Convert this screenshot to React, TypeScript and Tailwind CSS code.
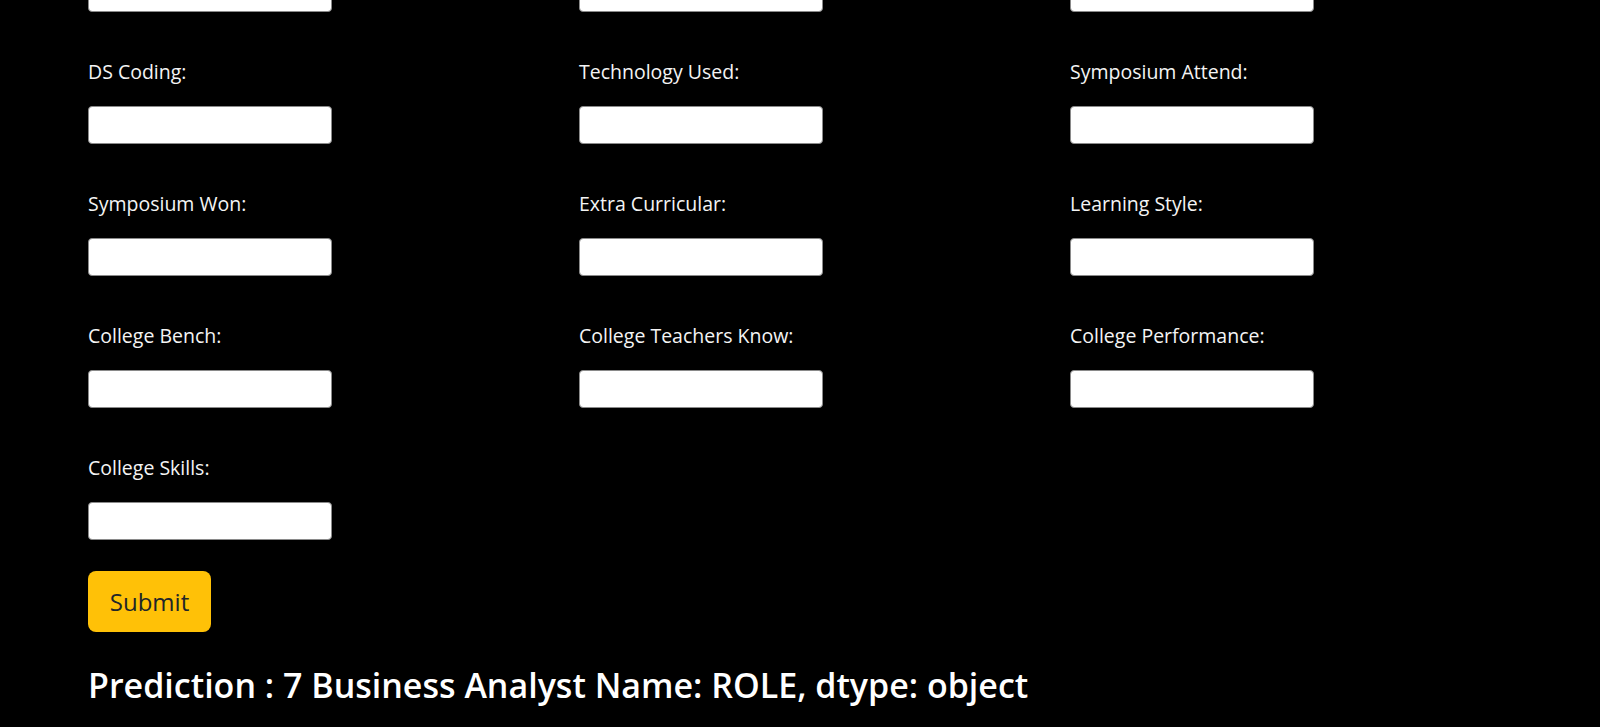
import { useState } from "react";

// top row is scrolled off; only the bottom of its inputs is showing
const topRow = ["top-1", "top-2", "top-3"];

const fields = [
  "DS Coding:",
  "Technology Used:",
  "Symposium Attend:",
  "Symposium Won:",
  "Extra Curricular:",
  "Learning Style:",
  "College Bench:",
  "College Teachers Know:",
  "College Performance:",
  "College Skills:",
];

function App() {
  const [values, setValues] = useState<Record<string, string>>({});

  const inputClass =
    "h-[38px] w-[244px] rounded-[4px] border border-[#8a8a8a] bg-white px-2 text-black";

  return (
    <div
      className="h-[727px] overflow-hidden bg-black text-white"
      style={{ fontFamily: '"Open Sans", "Noto Sans", sans-serif' }}
    >
      <form
        className="-mt-[26px] pl-[88px]"
        onSubmit={(e) => e.preventDefault()}
      >
        <div className="grid grid-cols-[491px_491px_491px] gap-y-[43px]">
          {topRow.map((key) => (
            <div key={key} className="flex flex-col">
              <input
                type="text"
                value={values[key] || ""}
                onChange={(e) => setValues({ ...values, [key]: e.target.value })}
                className={inputClass}
              />
            </div>
          ))}

          {fields.map((field) => (
            <div key={field} className="flex flex-col">
              <label className="pt-[2px] text-[19.5px] leading-[30px] text-[#f4f4f4]">
                {field}
              </label>

              <input
                type="text"
                value={values[field] || ""}
                onChange={(e) =>
                  setValues({ ...values, [field]: e.target.value })
                }
                className={`mt-[19px] ${inputClass}`}
              />
            </div>
          ))}
        </div>

        <button
          type="submit"
          className="mt-[31px] h-[61px] w-[123px] rounded-[8px] bg-[#ffc107] text-[24px] text-[#212529]"
        >
          Submit
        </button>
      </form>

      <h2 className="mt-[29px] pl-[88px] text-[34px] font-semibold leading-[48px]">
        Prediction : 7 Business Analyst Name: ROLE, dtype: object
      </h2>
    </div>
  );
}

export default App;
